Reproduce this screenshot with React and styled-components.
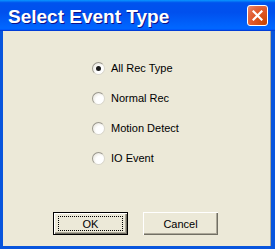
import React, { useState } from 'react';
import styled, { createGlobalStyle } from 'styled-components';

const GlobalStyle = createGlobalStyle`
    html, body {
        margin: 0;
        padding: 0;
        background: #ece9d8;
    }
`

const Window = styled.div`
    width: 275px;
    height: 249px;
    box-sizing: border-box;
    display: flex;
    flex-direction: column;
    background: #0855dd;
    padding: 0 4px 3px 3px;
    font-family: "Liberation Sans", Arial, sans-serif;
`

const TitleBar = styled.div`
    height: 31px;
    margin: 0 -4px 0 -3px;
    padding: 0 7px 0 8px;
    display: flex;
    align-items: center;
    justify-content: space-between;
    background: linear-gradient(180deg, #0997ff 0%, #0053ee 9%, #0050ee 40%, #0066ff 88%, #0066ff 93%, #005bff 95%, #003dd7 97%, #003dd7 100%);
`

const Title = styled.span`
    color: #fff;
    font-weight: bold;
    font-size: 19px;
    padding-top: 3px;
    text-shadow: 1px 1px #0f1089;
`

const CloseButton = styled.div`
    width: 21px;
    height: 21px;
    box-sizing: border-box;
    border: 1px solid #fff;
    border-radius: 3px;
    background: radial-gradient(circle at 90% 90%, #c94500 0%, #e0582a 55%, #e26a45 75%, #ee8c72 100%);
    display: flex;
    align-items: center;
    justify-content: center;
`

const Client = styled.div`
    flex: 1;
    background: #ece9d8;
    border-right: 1px solid #aca899;
    display: flex;
    flex-direction: column;
`

const RadioGroup = styled.div`
    display: flex;
    flex-direction: column;
    padding: 22px 0 0 89px;
`

const Option = styled.label`
    height: 30px;
    display: flex;
    align-items: center;
    gap: 6px;
    font-size: 11px;
    color: #000;
    cursor: default;
`

const Circle = styled.span`
    width: 13px;
    height: 13px;
    box-sizing: border-box;
    border-radius: 50%;
    border: 1px solid #d8d6cc;
    border-top-color: #9a988e;
    border-left-color: #9a988e;
    background: radial-gradient(circle at 65% 65%, #fff 40%, #eceae2 75%, #d4d2c8 100%);
    display: flex;
    align-items: center;
    justify-content: center;
    &::after {
        content: '';
        display: ${p => (p.checked ? 'block' : 'none')};
        width: 5px;
        height: 5px;
        border-radius: 50%;
        background: #1a1a1a;
    }
`

const ButtonRow = styled.div`
    margin-top: auto;
    padding: 0 0 11px 50px;
    display: flex;
    gap: 15px;
`

const Button = styled.button`
    width: 75px;
    height: 23px;
    box-sizing: border-box;
    padding: 0;
    font-family: "Liberation Sans", Arial, sans-serif;
    font-size: 11px;
    color: #000;
    background: #ece9d8;
    border: ${p => (p.primary ? '1px solid #000' : 'none')};
    box-shadow: inset 1px 1px #fff, inset -1px -1px #716f64, inset -2px -2px #aca899;
    display: flex;
    align-items: center;
    justify-content: center;
`

const Focus = styled.span`
    width: 65px;
    height: 15px;
    box-sizing: border-box;
    border: 1px dotted #000;
    display: flex;
    align-items: center;
    justify-content: center;
`

const options = ['All Rec Type', 'Normal Rec', 'Motion Detect', 'IO Event']

const App = () => {
    const [selected, setSelected] = useState(0)

    return (
        <>
            <GlobalStyle />
            <Window>
                <TitleBar>
                    <Title>Select Event Type</Title>
                    <CloseButton>
                        <svg width="11" height="11" viewBox="0 0 11 11">
                            <path d="M1.5 1.5 L9.5 9.5 M9.5 1.5 L1.5 9.5" stroke="#fff" strokeWidth="2.2" strokeLinecap="square" />
                        </svg>
                    </CloseButton>
                </TitleBar>
                <Client>
                    <RadioGroup>
                        {options.map((o, i) => (
                            <Option key={o} onClick={() => setSelected(i)}>
                                <Circle checked={selected === i} />
                                {o}
                            </Option>
                        ))}
                    </RadioGroup>
                    <ButtonRow>
                        <Button primary><Focus>OK</Focus></Button>
                        <Button>Cancel</Button>
                    </ButtonRow>
                </Client>
            </Window>
        </>
    )
}

export default App;
